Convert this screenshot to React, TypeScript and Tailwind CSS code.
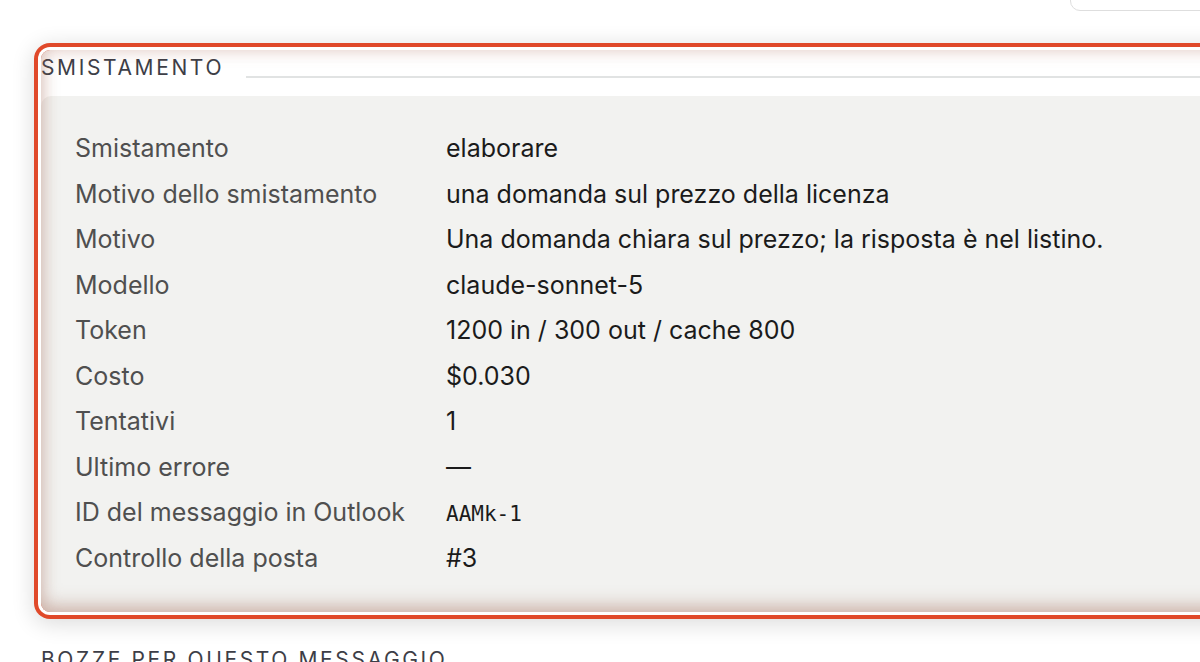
import React from "react";

const rows: { label: string; value: React.ReactNode }[] = [
  { label: "Smistamento", value: "elaborare" },
  { label: "Motivo dello smistamento", value: "una domanda sul prezzo della licenza" },
  { label: "Motivo", value: "Una domanda chiara sul prezzo; la risposta è nel listino." },
  { label: "Modello", value: "claude-sonnet-5" },
  { label: "Token", value: "1200 in / 300 out / cache 800" },
  { label: "Costo", value: "$0.030" },
  { label: "Tentativi", value: "1" },
  { label: "Ultimo errore", value: "—" },
  {
    label: "ID del messaggio in Outlook",
    value: (
      <span className="text-[21px] leading-none [font-family:'DejaVu_Sans_Mono','Liberation_Mono',monospace]">
        AAMk-1
      </span>
    ),
  },
  { label: "Controllo della posta", value: "#3" },
];

function SectionTitle({ children }: { children: React.ReactNode }) {
  return (
    <div className="flex items-end gap-[22px]">
      <h2 className="text-[21px] leading-[28px] tracking-[0.125em] text-[#3d3e47] uppercase whitespace-nowrap">
        {children}
      </h2>
      <div className="mb-[4px] h-[2px] flex-1 bg-[#e1e3e3]" />
    </div>
  );
}

export default function App() {
  return (
    <div className="w-[1200px] h-[662px] overflow-hidden bg-white [font-family:Inter,'Noto_Sans',sans-serif]">
      <div className="w-[1250px] pl-[41px]">
        {/* toolbar button, scrolled mostly out of view */}
        <div className="flex justify-end">
          <div className="-mt-[30px] mr-[10px] h-[41px] w-[170px] rounded-[10px] border border-[#dedede] bg-white" />
        </div>

        {/* triage section, highlighted */}
        <section className="relative mt-[39px] rounded-[9px]">
          <div className="pt-[4px]">
            <SectionTitle>Smistamento</SectionTitle>
          </div>
          <div className="mt-[14px] rounded-tl-[10px] bg-[#f2f2f0] pl-[34px] pt-[30px] pb-[31px]">
            <dl className="grid grid-cols-[371px_1fr] text-[25px] leading-[45.55px]">
              {rows.map((r) => (
                <React.Fragment key={r.label}>
                  <dt className="text-[#4f4f4f]">{r.label}</dt>
                  <dd className="text-[#1b1b1b]">{r.value}</dd>
                </React.Fragment>
              ))}
            </dl>
          </div>
          <div className="pointer-events-none absolute inset-0 rounded-[9px] shadow-[0_0_0_3px_#fff,0_0_0_7px_#e0492a,0_4px_22px_8px_rgba(0,0,0,0.14),inset_0_-7px_18px_rgba(150,90,70,0.34),inset_0_2px_16px_rgba(190,120,100,0.22)]" />
        </section>

        {/* next section */}
        <div className="mt-[34px]">
          <SectionTitle>Bozze per questo messaggio</SectionTitle>
        </div>
      </div>
    </div>
  );
}
